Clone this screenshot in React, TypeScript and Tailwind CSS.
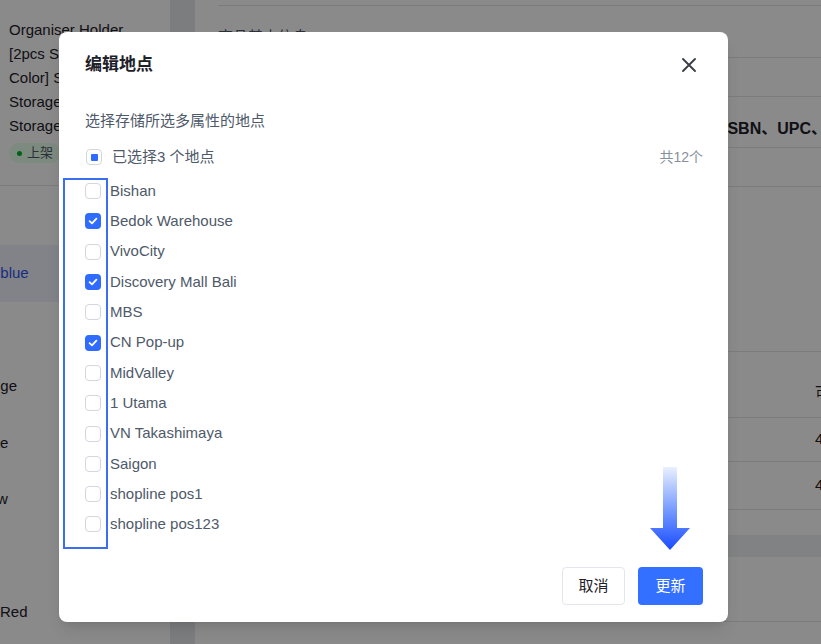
import React from "react";

const stores = [
  { name: "Bishan", on: false },
  { name: "Bedok Warehouse", on: true },
  { name: "VivoCity", on: false },
  { name: "Discovery Mall Bali", on: true },
  { name: "MBS", on: false },
  { name: "CN Pop-up", on: true },
  { name: "MidValley", on: false },
  { name: "1 Utama", on: false },
  { name: "VN Takashimaya", on: false },
  { name: "Saigon", on: false },
  { name: "shopline pos1", on: false },
  { name: "shopline pos123", on: false },
];

function Checkbox({ checked }: { checked: boolean }) {
  if (checked) {
    return (
      <span className="flex h-[16px] w-[16px] shrink-0 items-center justify-center rounded-[4px] bg-[#2f6bff]">
        <svg width="12" height="12" viewBox="0 0 12 12" fill="none">
          <path d="M2.6 6.2 L5 8.4 L9.4 3.6" stroke="white" strokeWidth="1.8" strokeLinecap="round" strokeLinejoin="round" />
        </svg>
      </span>
    );
  }
  return <span className="h-[16px] w-[16px] shrink-0 rounded-[4px] border border-[#d3d6dc] bg-white" />;
}

export default function App() {
  return (
    <div className="relative h-[644px] w-[821px] overflow-hidden bg-white font-['Liberation_Sans','Noto_Sans_CJK_SC',sans-serif]">
      {/* page behind the dialog */}
      <div className="flex h-full">
        <aside className="w-[170px] shrink-0 overflow-hidden text-[15px] text-[#1d2129]">
          <div className="px-[9px] pt-[18px] leading-[24px] whitespace-nowrap">
            <div>Organiser Holder</div>
            <div>[2pcs Storage Box</div>
            <div>Color] Storage</div>
            <div>Storage Box</div>
            <div>Storage Bag</div>
            <span className="mt-[5px] inline-flex h-[20px] items-center gap-[5px] rounded-full bg-[#e8ffea] px-[8px] text-[13px] text-[#4e5969]">
              <span className="h-[5px] w-[5px] rounded-full bg-[#00b42a]" />
              上架
            </span>
          </div>
          <div className="mt-[22px] border-t border-[#e5e6eb]" />
          <div className="h-[59px]" />
          <div className="flex h-[56.5px] items-center whitespace-nowrap bg-[#eef2fb] text-[#2f54eb]">
            <span className="-ml-[38px]">Navy blue</span>
          </div>
          <div className="h-[56.5px]" />
          <div className="flex h-[56.5px] items-center whitespace-nowrap">
            <span className="-ml-[33px]">Orange</span>
          </div>
          <div className="flex h-[56.5px] items-center whitespace-nowrap">
            <span className="-ml-[30px]">White</span>
          </div>
          <div className="flex h-[56.5px] items-center whitespace-nowrap">
            <span className="-ml-[35px]">Yellow</span>
          </div>
          <div className="h-[56.5px]" />
          <div className="flex h-[56.5px] items-center whitespace-nowrap">
            <span>Red</span>
          </div>
        </aside>
        <div className="w-[25px] shrink-0 bg-[#e6e7eb]" />
        <main className="flex min-w-0 flex-1 flex-col pl-[23px] text-[15px] text-[#1d2129]">
          <div className="h-[5px]" />
          <div className="h-[53px] border-y border-[#e5e6eb] pt-[20px] text-[#4e5969]">商品基本信息</div>
          <div className="h-[39px] border-b border-[#e5e6eb]" />
          <div className="flex h-[51px] items-center whitespace-nowrap border-b border-[#e5e6eb] pt-[14px] text-[16px] font-semibold">
            <span className="ml-[505px]">ISBN、UPC、GTIN等</span>
          </div>
          <div className="h-[39px] border-b border-[#e5e6eb]" />
          <div className="h-[165px] border-b border-[#e5e6eb]" />
          <div className="h-[18px]" />
          <div className="flex h-[47px] items-center whitespace-nowrap bg-white">
            <span className="ml-[597px]">可售库存</span>
          </div>
          <div className="flex h-[45px] items-center border-y border-[#e5e6eb]">
            <span className="ml-[597px]">4</span>
          </div>
          <div className="flex h-[48px] items-center border-b border-[#e5e6eb]">
            <span className="ml-[597px]">4</span>
          </div>
          <div className="h-[25px]" />
          <div className="h-[22px] bg-[#eef0f3]" />
          <div className="h-[65px] border-b border-[#e5e6eb]" />
        </main>
      </div>

      {/* mask */}
      <div className="absolute inset-0 bg-[rgba(0,0,0,0.46)]" />

      {/* dialog */}
      <div className="absolute left-[59px] top-[32px] flex h-[590px] w-[669px] flex-col rounded-[8px] bg-white pb-[17px] pl-[26px] pr-[25px] shadow-lg">
        <div className="mt-[22px] flex h-[22px] items-center justify-between">
          <h2 className="text-[17px] font-bold text-[#1d2129]">编辑地点</h2>
          <button className="flex h-[28px] w-[28px] items-center justify-center">
            <svg width="16" height="16" viewBox="0 0 16 16" fill="none">
              <path d="M2 2 L14 14 M14 2 L2 14" stroke="#3a3f47" strokeWidth="1.9" strokeLinecap="round" />
            </svg>
          </button>
        </div>

        <p className="mt-[35px] text-[15px] leading-[20px] text-[#4e5969]">选择存储所选多属性的地点</p>

        <div className="mt-[16px] flex h-[20px] items-center justify-between">
          <div className="flex items-center gap-[10px] pl-[1px]">
            <span className="flex h-[16px] w-[16px] items-center justify-center rounded-[4px] border border-[#d3d6dc]">
              <span className="h-[7px] w-[7px] rounded-[1px] bg-[#2f6bff]" />
            </span>
            <span className="text-[15px] text-[#4e5969]">已选择3 个地点</span>
          </div>
          <span className="text-[14px] text-[#86909c]">共12个</span>
        </div>

        <ul className="mt-[9px]">
          {stores.map((s) => (
            <li key={s.name} className="flex h-[30.3px] items-center gap-[9px] text-[15px] text-[#4e5969]">
              <Checkbox checked={s.on} />
              <span>{s.name}</span>
            </li>
          ))}
        </ul>

        <div className="mt-auto flex justify-end gap-[13px]">
          <button className="h-[38px] w-[63px] rounded-[4px] border border-[#e5e6eb] bg-white text-[15px] text-[#1d2129]">取消</button>
          <button className="h-[38px] w-[65px] rounded-[4px] bg-[#3370ff] text-[15px] text-white">更新</button>
        </div>

        {/* annotation: highlight box */}
        <div className="absolute left-[4px] top-[146px] h-[371px] w-[45px] border-2 border-[#3b6ef0]" />

        {/* annotation: arrow */}
        <svg className="absolute left-[591px] top-[435px]" width="40" height="83" viewBox="0 0 40 83">
          <defs>
            <linearGradient id="arrowGrad" x1="0" y1="0" x2="0" y2="1">
              <stop offset="0" stopColor="#e9f0ff" />
              <stop offset="0.55" stopColor="#6f95ff" />
              <stop offset="1" stopColor="#1a4cff" />
            </linearGradient>
          </defs>
          <path d="M13 0 H27 V61 H40 L20 83 L0 61 H13 Z" fill="url(#arrowGrad)" />
        </svg>
      </div>
    </div>
  );
}
